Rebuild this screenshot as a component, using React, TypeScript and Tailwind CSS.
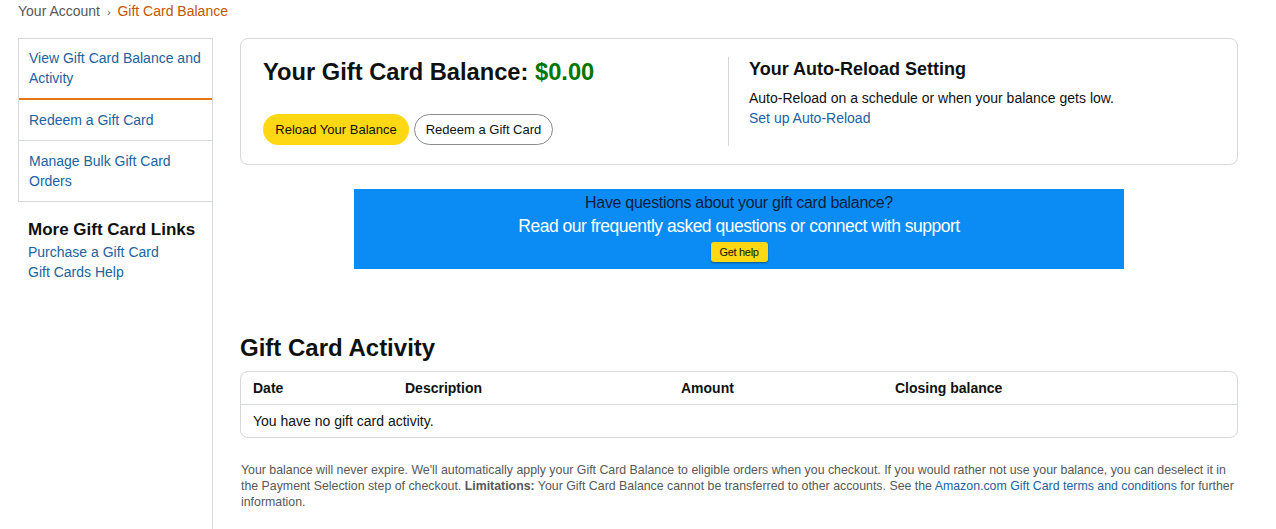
import React from "react";

const font = { fontFamily: '"Liberation Sans", Arial, sans-serif' };

export default function App() {
  return (
    <div className="min-h-[529px] bg-white text-[#0f1111]" style={font}>
      <div className="pl-[18px] pt-[3px] text-[14px] leading-[17px] text-[#565959]">
        Your Account <span className="mx-[3px] text-[11px]">›</span>{" "}
        <span className="text-[#c45500]">Gift Card Balance</span>
      </div>
      <div className="flex pl-[18px] pr-[38px] pt-[17px]">
        {/* sidebar */}
        <div className="w-[195px] shrink-0 border-r border-[#d5d9d9] min-h-[492px]">
          <div className="border-l border-t border-[#d5d9d9]">
            <div className="border-b-2 border-[#e47911] px-[10px] pt-[9px] pb-[10px] text-[14px] leading-[20px] text-[#2162a1]">
              View Gift Card Balance and Activity
            </div>
            <div className="border-b border-[#d5d9d9] px-[10px] py-[10px] text-[14px] leading-[20px] text-[#2162a1]">
              Redeem a Gift Card
            </div>
            <div className="border-b border-[#d5d9d9] px-[10px] py-[10px] text-[14px] leading-[20px] text-[#2162a1]">
              Manage Bulk Gift Card Orders
            </div>
          </div>
          <div className="pl-[10px] pt-[17px]">
            <div className="text-[17px] font-bold leading-[22px] text-[#0f1111]">More Gift Card Links</div>
            <div className="mt-[1px] text-[14px] leading-[20px] text-[#2162a1]">Purchase a Gift Card</div>
            <div className="text-[14px] leading-[20px] text-[#2162a1]">Gift Cards Help</div>
          </div>
        </div>

        {/* main */}
        <div className="ml-[27px] flex-1">
          <div className="flex rounded-lg border border-[#d5d9d9] px-[22px] pt-[18px] pb-[18px]">
            <div className="w-[466px] border-r border-[#d5d9d9]">
              <div className="text-[23.7px] font-bold leading-[30px]">
                Your Gift Card Balance: <span className="text-[#007600]">$0.00</span>
              </div>
              <div className="mt-[27px] mb-[1px] flex gap-[5px]">
                <div className="flex h-[31px] w-[146px] items-center justify-center rounded-full bg-[#ffd814] text-[13px]">
                  Reload Your Balance
                </div>
                <div className="flex h-[31px] w-[139px] items-center justify-center rounded-full border border-[#888c8c] bg-white text-[13px]">
                  Redeem a Gift Card
                </div>
              </div>
            </div>
            <div className="pl-[20px] pt-[1px]">
              <div className="text-[18px] font-bold leading-[22px]">Your Auto-Reload Setting</div>
              <div className="mt-[8px] text-[14px] leading-[20px]">
                Auto-Reload on a schedule or when your balance gets low.
              </div>
              <div className="text-[14px] leading-[20px] text-[#2162a1]">Set up Auto-Reload</div>
            </div>
          </div>

          <div className="mx-auto mt-[24px] flex h-[80px] w-[770px] flex-col items-center bg-[#0b8cf4] pt-[3px]">
            <div className="text-[16px] leading-[21px] tracking-[-0.3px] text-[#0f1e3d]">
              Have questions about your gift card balance?
            </div>
            <div className="mt-[1px] text-[17.5px] leading-[24px] tracking-[-0.5px] text-white">
              Read our frequently asked questions or connect with support
            </div>
            <div className="mt-[4px] flex h-[20px] w-[57px] items-center justify-center rounded-[3px] bg-[#ffd814] text-[11px] tracking-[-0.3px] text-[#0f1111] shadow-[0_1px_2px_rgba(0,0,0,0.4)]">
              Get help
            </div>
          </div>

          <div className="mt-[64px] text-[24px] font-bold leading-[30px]">Gift Card Activity</div>
          <div className="mt-[8px] rounded-lg border border-[#d5d9d9]">
            <div className="grid h-[33px] grid-cols-[152px_276px_214px_1fr] items-center border-b border-[#d5d9d9] pl-[12px] text-[14px] font-bold">
              <div>Date</div>
              <div>Description</div>
              <div>Amount</div>
              <div>Closing balance</div>
            </div>
            <div className="flex h-[32px] items-center pl-[12px] text-[14px]">You have no gift card activity.</div>
          </div>

          <div className="mt-[24px] pl-[1px] text-[12.35px] leading-[16px] text-[#565959]">
            Your balance will never expire. We'll automatically apply your Gift Card Balance to eligible orders when you checkout. If you would rather not use your balance, you can deselect it in the Payment Selection step of checkout.{" "}
            <span className="font-bold">Limitations:</span> Your Gift Card Balance cannot be transferred to other accounts. See the{" "}
            <span className="text-[#2162a1]">Amazon.com Gift Card terms and conditions</span> for further information.
          </div>
        </div>
      </div>
    </div>
  );
}
